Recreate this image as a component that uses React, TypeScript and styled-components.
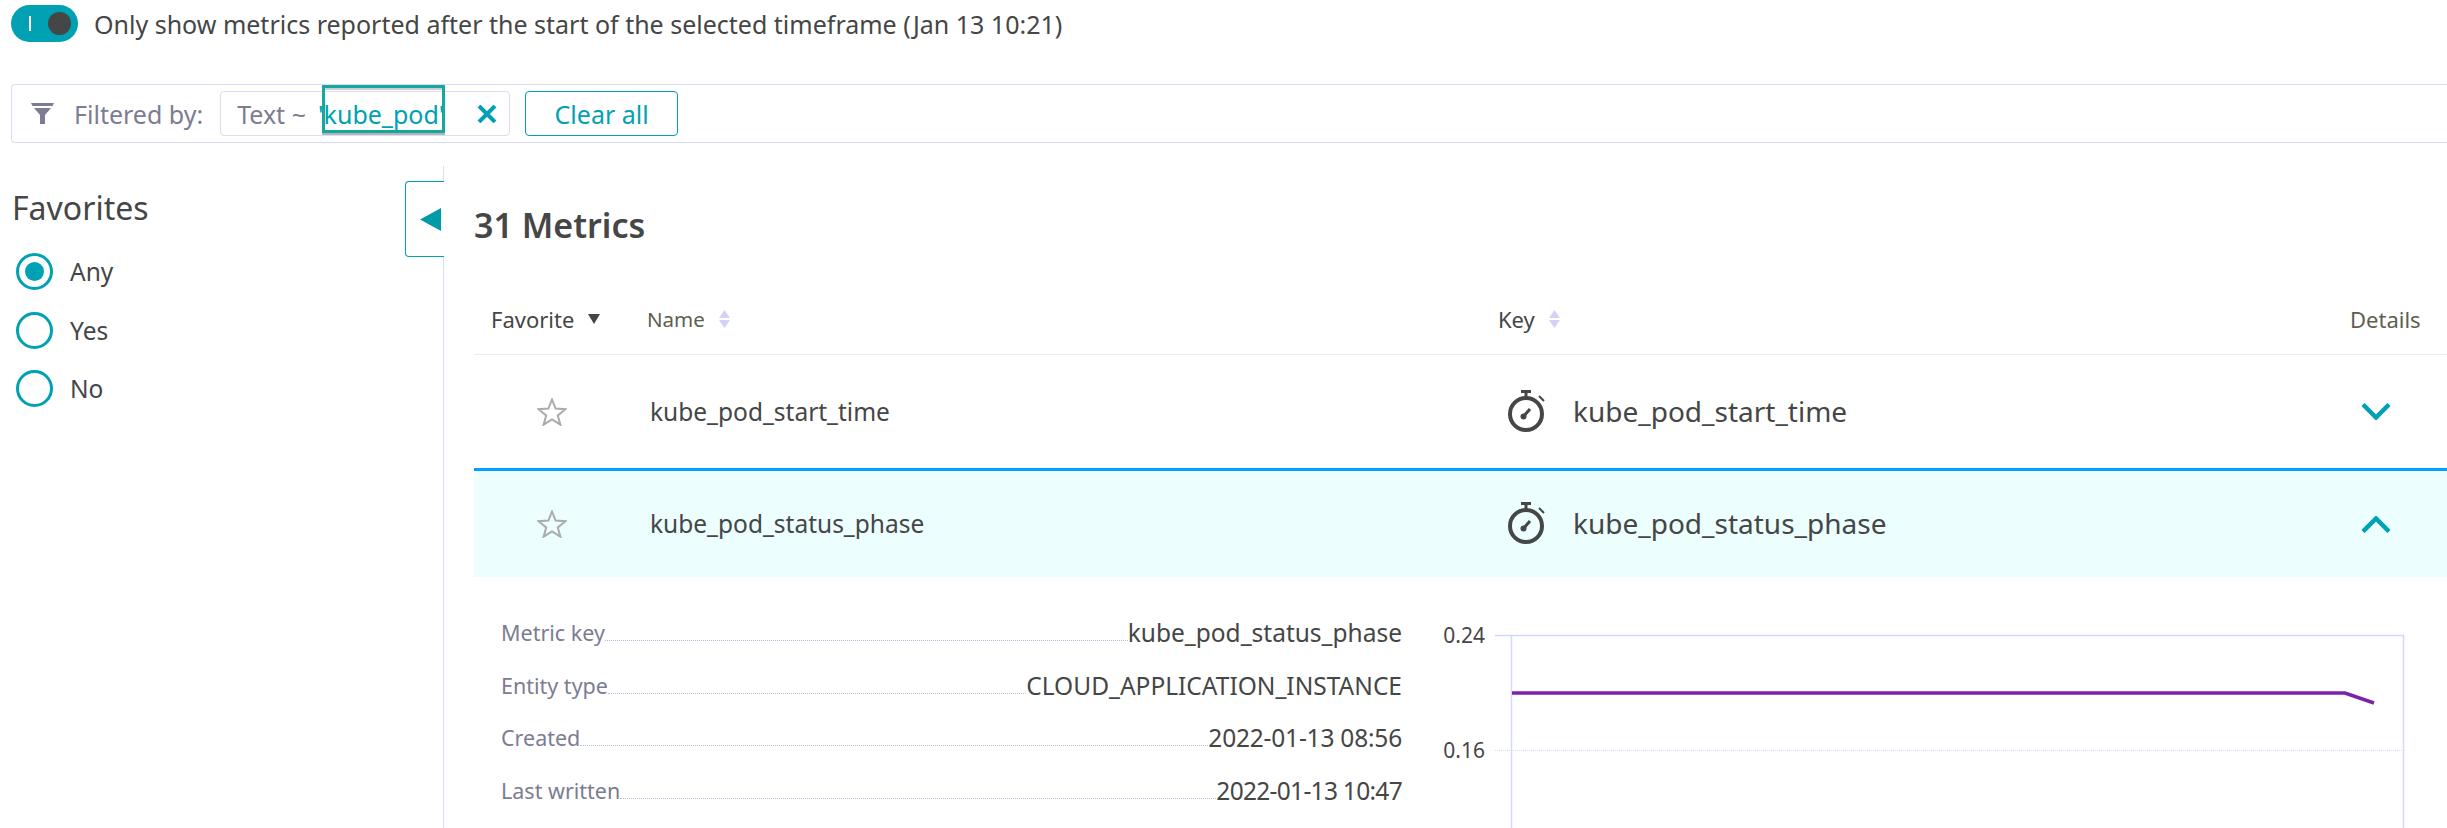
import React from "react";
import styled, { createGlobalStyle } from "styled-components";

const teal = "#00a1b2";
const ink = "#454646";
const lavender = "#dcdcf5";

const GlobalStyle = createGlobalStyle`
  html, body {
    margin: 0;
    height: 828px;
    overflow: hidden;
    background: #fff;
    font-family: "Noto Sans", "Open Sans", sans-serif;
    color: ${ink};
  }
`;

const Page = styled.div`
  width: 2447px;
  height: 828px;
  overflow: hidden;
`;

const ToggleRow = styled.div`
  display: flex;
  align-items: center;
  gap: 16px;
  height: 37px;
  padding: 5px 0 0 11px;
  font-size: 25px;
`;

const Toggle = styled.div`
  width: 67px;
  height: 37px;
  box-sizing: border-box;
  padding: 7px 7px 7px 18px;
  border-radius: 19px;
  background: ${teal};
  display: flex;
  align-items: center;
  justify-content: space-between;
`;

const ToggleMark = styled.span`
  width: 2px;
  height: 15px;
  background: #fff;
`;

const ToggleKnob = styled.span`
  width: 23px;
  height: 23px;
  border-radius: 50%;
  background: ${ink};
`;

const FilterBar = styled.div`
  margin: 42px 0 0 11px;
  height: 59px;
  box-sizing: border-box;
  border: 1px solid ${lavender};
  border-right: 0;
  border-radius: 4px 0 0 4px;
  display: flex;
  align-items: center;
  padding-left: 19px;
  font-size: 25px;
`;

const FilterLabel = styled.span`
  margin-left: 20px;
  color: #7c7c92;
`;

const Chip = styled.div`
  position: relative;
  margin-left: 17px;
  width: 290px;
  height: 45px;
  box-sizing: border-box;
  border: 1px solid ${lavender};
  border-radius: 4px;
  display: flex;
  align-items: center;
  padding-left: 16px;
  color: #7c7c92;
`;

const ChipValue = styled.span`
  margin-left: 12px;
  color: ${teal};
`;

const ChipClose = styled.svg`
  position: absolute;
  left: 256px;
  top: 13px;
`;

const Highlight = styled.div`
  position: absolute;
  left: 101px;
  top: -7px;
  width: 123px;
  height: 48px;
  box-sizing: border-box;
  border: 3px solid #14a89f;
  box-shadow: 0 2px 0 #b5b5b5, inset 0 2px 0 #cfcfcf;
`;

const ClearButton = styled.button`
  margin-left: 15px;
  width: 153px;
  height: 45px;
  box-sizing: border-box;
  border: 1px solid ${teal};
  border-radius: 4px;
  background: #fff;
  color: ${teal};
  font: inherit;
  padding: 0;
`;

const Content = styled.div`
  display: flex;
  margin-top: 23px;
  height: 662px;
`;

const Sidebar = styled.aside`
  position: relative;
  width: 431px;
  flex: none;
  border-right: 1px solid ${lavender};
  padding: 20px 0 0 12px;
`;

const SidebarTitle = styled.div`
  font-size: 32px;
  line-height: 44px;
`;

const RadioList = styled.div`
  display: flex;
  flex-direction: column;
  gap: 21.5px;
  margin: 23px 0 0 4px;
`;

const RadioRow = styled.label`
  display: flex;
  align-items: center;
  gap: 17px;
  height: 37px;
  font-size: 24.5px;
`;

const RadioMark = styled.span<{ $checked?: boolean }>`
  width: 37px;
  height: 37px;
  box-sizing: border-box;
  border: 3px solid ${teal};
  border-radius: 50%;
  display: flex;
  align-items: center;
  justify-content: center;
  &::after {
    content: "";
    display: ${(p) => (p.$checked ? "block" : "none")};
    width: 19px;
    height: 19px;
    border-radius: 50%;
    background: ${teal};
  }
`;

const CollapseTab = styled.div`
  position: absolute;
  right: -1px;
  top: 15px;
  width: 39px;
  height: 76px;
  box-sizing: border-box;
  background: #fff;
  border: 1px solid ${teal};
  border-right: 0;
  border-radius: 4px 0 0 4px;
  display: flex;
  align-items: center;
  padding-left: 14px;
`;

const Main = styled.main`
  flex: 1;
  min-width: 0;
  padding-left: 30px;
`;

const Heading = styled.h2`
  margin: 35px 0 0;
  font-size: 34px;
  line-height: 48px;
  font-weight: 600;
`;

const columns = "173px 851px 1fr 97px";

const HeaderRow = styled.div`
  display: grid;
  grid-template-columns: ${columns};
  align-items: center;
  margin-top: 36px;
  height: 68px;
  padding-bottom: 1px;
  border-bottom: 1px solid #ececf7;
`;

const HeaderCell = styled.div<{ $muted?: boolean; $inset?: number; $small?: boolean }>`
  display: flex;
  align-items: center;
  gap: 14px;
  padding-left: ${(p) => p.$inset ?? 0}px;
  color: ${(p) => (p.$muted ? "#5e5e50" : ink)};
  font-size: ${(p) => (p.$small ? 20.5 : 22)}px;
`;

const Row = styled.div<{ $open?: boolean }>`
  display: grid;
  grid-template-columns: ${columns};
  align-items: center;
  height: ${(p) => (p.$open ? 106 : 113)}px;
  background: ${(p) => (p.$open ? "#ecfefe" : "#fff")};
  border-top: ${(p) => (p.$open ? "3px solid #00a1ff" : "0")};
`;

const StarCell = styled.div`
  padding-left: 63px;
  display: flex;
`;

const NameCell = styled.div`
  padding: 0 0 1px 3px;
  font-size: 24.5px;
`;

const KeyCell = styled.div`
  display: flex;
  align-items: center;
  gap: 26px;
  padding: 0 0 2px 10px;
  font-size: 28px;
`;

const ChevronCell = styled.div`
  display: flex;
  padding-left: 11px;
`;

const Details = styled.div`
  display: flex;
  padding: 18.5px 0 0 27px;
`;

const Facts = styled.dl`
  width: 901px;
  flex: none;
  margin: 0;
`;

const Fact = styled.div`
  display: flex;
  align-items: flex-end;
  height: 52.5px;
`;

const FactLabel = styled.dt`
  color: #7c7c92;
  font-size: 21.5px;
  line-height: 30px;
`;

const FactLeader = styled.span`
  flex: 1;
  border-bottom: 1px dotted #b9b9dc;
  margin-bottom: 7px;
`;

const FactValue = styled.dd<{ $tighten?: number }>`
  margin: 0;
  font-size: 24.5px;
  line-height: 30px;
  letter-spacing: ${(p) => p.$tighten ?? 0}px;
`;

const Chart = styled.svg`
  flex: none;
  margin: 25.5px 0 0 1px;
  overflow: visible;
`;

const ChartLabel = styled.text`
  font-family: "Noto Sans", sans-serif;
  font-size: 21px;
  fill: ${ink};
`;

const Funnel = () => (
  <svg width="23" height="21" viewBox="0 0 23 21">
    <path d="M0 0h23l-1.5 3H1.5z" fill="#7c7c92" />
    <path d="M3 5h17l-6 7v9H9v-9z" fill="#7c7c92" />
  </svg>
);

const Star = () => (
  <svg width="30" height="28" viewBox="0 0 30 28">
    <path
      d="M15 1.5l3.6 9.1 9.9.6-7.7 6.2 2.6 9.3L15 21.5l-8.4 5.2 2.6-9.3-7.7-6.2 9.9-.6z"
      fill="none"
      stroke="#ababab"
      strokeWidth="2"
    />
  </svg>
);

const Stopwatch = () => (
  <svg width="39" height="42" viewBox="0 0 39 42">
    <circle cx="18" cy="24" r="16" fill="none" stroke={ink} strokeWidth="4" />
    <path d="M13 1.5h10M18 2v6" stroke={ink} strokeWidth="3" fill="none" />
    <path d="M31 6l5 5" stroke={ink} strokeWidth="2" fill="none" />
    <path d="M15 27l7-8" stroke={ink} strokeWidth="3" fill="none" />
    <circle cx="15.5" cy="26.5" r="3" fill={ink} />
  </svg>
);

const Chevron = ({ up }: { up?: boolean }) => (
  <svg width="30" height="17" viewBox="0 0 30 17">
    <path
      d={up ? "M2 15.5L15 2.5l13 13" : "M2 1.5l13 13 13-13"}
      fill="none"
      stroke={teal}
      strokeWidth="4.5"
    />
  </svg>
);

const SortArrows = () => (
  <svg width="11" height="18" viewBox="0 0 11 18">
    <path d="M5.5 0L11 8H0zM0 10h11l-5.5 8z" fill="#d2d2f5" />
  </svg>
);

const rows: [string, string, number][] = [
  ["Metric key", "kube_pod_status_phase", 0],
  ["Entity type", "CLOUD_APPLICATION_INSTANCE", 0],
  ["Created", "2022-01-13 08:56", -0.2],
  ["Last written", "2022-01-13 10:47", -0.7],
];

export default function App() {
  return (
    <Page>
      <GlobalStyle />
      <ToggleRow>
        <Toggle>
          <ToggleMark />
          <ToggleKnob />
        </Toggle>
        Only show metrics reported after the start of the selected timeframe (Jan 13 10:21)
      </ToggleRow>
      <FilterBar>
        <Funnel />
        <FilterLabel>Filtered by:</FilterLabel>
        <Chip>
          Text ~<ChipValue>'kube_pod'</ChipValue>
          <ChipClose width="20" height="18" viewBox="0 0 20 18">
            <path d="M2 1l16 16M18 1L2 17" stroke={teal} strokeWidth="4" fill="none" />
          </ChipClose>
          <Highlight />
        </Chip>
        <ClearButton>Clear all</ClearButton>
      </FilterBar>
      <Content>
        <Sidebar>
          <SidebarTitle>Favorites</SidebarTitle>
          <RadioList>
            <RadioRow><RadioMark $checked />Any</RadioRow>
            <RadioRow><RadioMark />Yes</RadioRow>
            <RadioRow><RadioMark />No</RadioRow>
          </RadioList>
          <CollapseTab>
            <svg width="21" height="23" viewBox="0 0 21 23">
              <path d="M21 0v23L0 11.5z" fill="#009aa8" />
            </svg>
          </CollapseTab>
        </Sidebar>
        <Main>
          <Heading>31 Metrics</Heading>
          <HeaderRow>
            <HeaderCell $inset={17}>
              Favorite
              <svg width="12" height="10" viewBox="0 0 12 10">
                <path d="M0 0h12L6 10z" fill={ink} />
              </svg>
            </HeaderCell>
            <HeaderCell $muted $small>Name <SortArrows /></HeaderCell>
            <HeaderCell>Key <SortArrows /></HeaderCell>
            <HeaderCell $muted>Details</HeaderCell>
          </HeaderRow>
          <Row>
            <StarCell><Star /></StarCell>
            <NameCell>kube_pod_start_time</NameCell>
            <KeyCell><Stopwatch />kube_pod_start_time</KeyCell>
            <ChevronCell><Chevron /></ChevronCell>
          </Row>
          <Row $open>
            <StarCell><Star /></StarCell>
            <NameCell>kube_pod_status_phase</NameCell>
            <KeyCell><Stopwatch />kube_pod_status_phase</KeyCell>
            <ChevronCell><Chevron up /></ChevronCell>
          </Row>
          <Details>
            <Facts>
              {rows.map(([label, value, tighten]) => (
                <Fact key={label}>
                  <FactLabel>{label}</FactLabel>
                  <FactLeader />
                  <FactValue $tighten={tighten}>{value}</FactValue>
                </Fact>
              ))}
            </Facts>
            <Chart width="1000" height="230" viewBox="1403 620 1000 230">
              <path d="M1495 634.5h909M1511.5 634v200M2403.5 634v200" stroke="#d2d8ff" strokeWidth="1.5" fill="none" />
              <path d="M1495 749.5h909" stroke="#d2d8ff" strokeWidth="1" strokeDasharray="1 1" fill="none" />
              <path d="M1512 692h833l29 10" stroke="#7c22a8" strokeWidth="3.5" fill="none" />
              <ChartLabel x="1485" y="642" textAnchor="end">0.24</ChartLabel>
              <ChartLabel x="1485" y="757" textAnchor="end">0.16</ChartLabel>
            </Chart>
          </Details>
        </Main>
      </Content>
    </Page>
  );
}
